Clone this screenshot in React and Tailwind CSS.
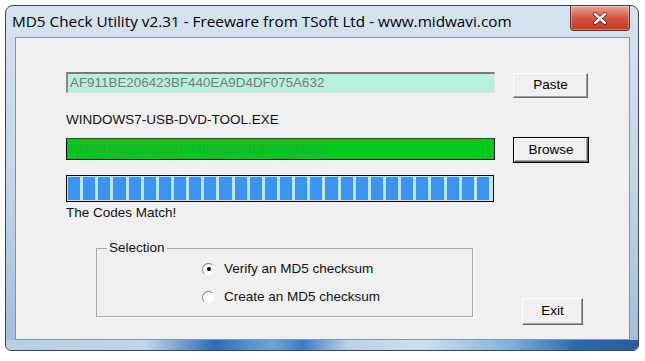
import React from 'react';

const HASH = 'AF911BE206423BF440EA9D4DF075A632';

function WinButton({ children, focused, className = '' }) {
    return (
        <div className={`${focused ? 'border border-black' : ''} ${className}`}>
            <div className="w-full h-full flex items-center justify-center bg-[#f0f0f0] border border-t-white border-l-white border-r-[#696969] border-b-[#696969] shadow-[inset_-1px_-1px_0_#a0a0a0] text-[13.5px] text-black">
                {children}
            </div>
        </div>
    );
}

function Radio({ checked, label }) {
    return (
        <div className="flex items-center h-[18px]">
            <div className="w-[13px] h-[13px] rounded-full bg-white border border-t-[#808080] border-l-[#808080] border-r-[#f4f4f4] border-b-[#f4f4f4] flex items-center justify-center">
                {checked && <div className="w-[4px] h-[4px] rounded-full bg-black" />}
            </div>
            <span className="ml-[9px] text-[13.5px] text-[#111]">{label}</span>
        </div>
    );
}

function App() {
    const blocks = Array.from({ length: 28 });

    return (
        <div className="min-h-screen bg-white pt-[5px] pl-[5px] font-['Liberation_Sans',Arial,sans-serif]">
            <div className="w-[634px] h-[346px] rounded-t-[8px] rounded-b-[6px] border border-[#3a4656] bg-gradient-to-b from-[#d6e3f0] via-[#c4d6e9] to-[#9fbddc] flex flex-col overflow-hidden">
                {/* title bar */}
                <div className="h-[31px] flex items-start shrink-0">
                    <span className="pl-[6px] pt-[5px] text-[15.3px] text-black font-['Open_Sans',sans-serif] leading-[20px] whitespace-nowrap">
                        MD5 Check Utility v2.31 - Freeware from TSoft Ltd - www.midwavi.com
                    </span>
                    <div className="ml-auto mr-[8px] w-[60px] h-[25px] shrink-0 rounded-b-[4px] border border-t-0 border-[#6b2a22] bg-gradient-to-b from-[#e8a496] via-[#d2533f] to-[#c23b24] flex items-center justify-center shadow-[inset_0_0_0_1px_rgba(255,255,255,0.35)]">
                        <svg width="14" height="13" viewBox="0 0 14 13">
                            <path d="M2 2 L12 11 M12 2 L2 11" stroke="#5a1a10" strokeWidth="4" strokeLinecap="round" />
                            <path d="M2 2 L12 11 M12 2 L2 11" stroke="#ffffff" strokeWidth="2.4" strokeLinecap="round" />
                        </svg>
                    </div>
                </div>

                {/* client area */}
                <div className="ml-[9px] mr-[8px] h-[303px] shrink-0 bg-[#f0f0f0] border border-[#7d95b0] pl-[50px] pt-[34px] flex flex-col items-start">
                    <div className="flex items-start">
                        <div className="w-[429px] h-[21px] bg-[#b6f1dd] border-t-2 border-l-2 border-t-[#7a7a7a] border-l-[#8a8a8a] border-r border-b border-r-[#e3e3e3] border-b-[#e3e3e3] pl-[2px] flex items-center text-[13.4px] text-[#7a7a7a] leading-none">
                            {HASH}
                        </div>
                        <WinButton className="ml-[18px] mt-px w-[75px] h-[25px]">Paste</WinButton>
                    </div>

                    <div className="mt-[14px] text-[13.5px] leading-[16px] text-[#111]">WINDOWS7-USB-DVD-TOOL.EXE</div>

                    <div className="mt-[9px] flex items-start">
                        <div className="mt-px w-[429px] h-[22px] bg-[#00c81c] border border-black border-t-[#404040] pl-[3px] flex items-center text-[13.4px] text-[#2aab30] leading-none">
                            {HASH}
                        </div>
                        <WinButton focused className="ml-[18px] w-[76px] h-[26px]">Browse</WinButton>
                    </div>

                    <div className="mt-[12px] w-[428px] h-[27px] border border-black bg-[#bfe6f8] pl-px pr-[4px] py-px flex gap-[3px]">
                        {blocks.map((_, i) => (
                            <div key={i} className="flex-1 bg-[#3a95f2]" />
                        ))}
                    </div>

                    <div className="mt-[3px] text-[13.5px] leading-[16px] text-[#111]">The Codes Match!</div>

                    <div className="mt-[19px] flex items-start">
                        <fieldset className="ml-[30px] w-[377px] h-[77px] border border-[#a8a8a8] shadow-[1px_1px_0_#ffffff] px-0 pt-[4px]">
                            <legend className="ml-[10px] px-[2px] text-[13.5px] leading-[16px] text-[#111]">Selection</legend>
                            <div className="pl-[105px]">
                                <Radio checked label="Verify an MD5 checksum" />
                                <div className="mt-[10px]">
                                    <Radio label="Create an MD5 checksum" />
                                </div>
                            </div>
                        </fieldset>
                        <WinButton className="ml-[49px] mt-[58px] w-[61px] h-[27px]">Exit</WinButton>
                    </div>
                </div>

                {/* bottom frame */}
                <div className="flex-1 bg-[linear-gradient(to_right,#b7cde4_0%,#c2d6ea_22%,#2f6cb4_33%,#6fa6d8_42%,#3e7bc1_47%,#b9d2e6_54%,#cfe0ec_66%,#7fb0d8_80%,#2f68ad_90%,#2a5c9c_100%)]" />
            </div>
        </div>
    );
}

export default App;
